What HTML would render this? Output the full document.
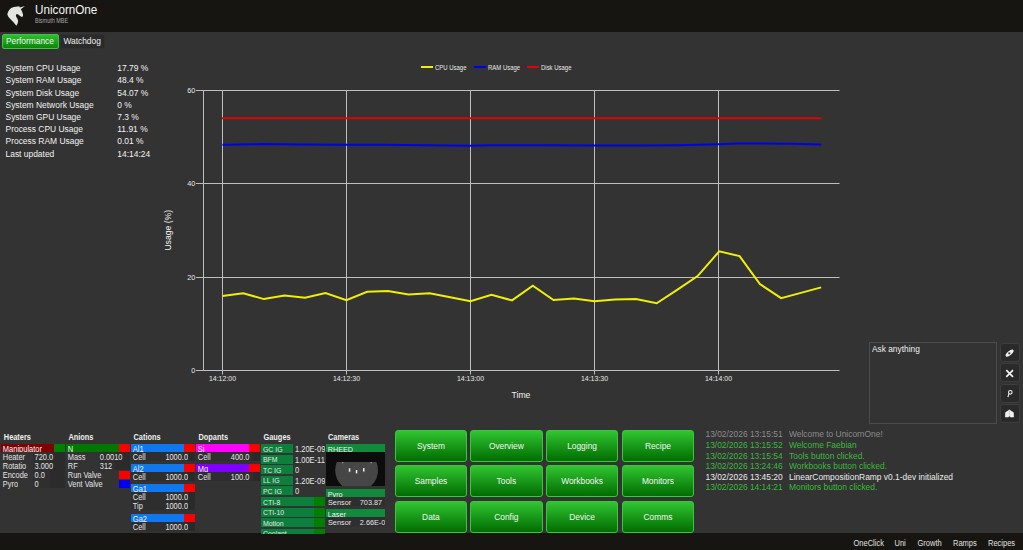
<!DOCTYPE html><html><head><meta charset="utf-8"><style>
*{margin:0;padding:0;box-sizing:border-box}
html,body{width:1023px;height:550px;overflow:hidden;background:#333333;font-family:"Liberation Sans",sans-serif;color:#e8e8e8}
.a{position:absolute}
.t{position:absolute;white-space:nowrap;line-height:1;transform:scaleY(1.1);transform-origin:0 0}
.tab{position:absolute;top:34px;height:15px;font-size:8.4px;line-height:12.5px;color:#f0f0f0;border-radius:2px}
.stat{font-size:8.45px;color:#f2f2f2}
.btn{position:absolute;width:72.5px;height:32px;border:1px solid #36cb36;border-radius:3px;background:linear-gradient(#31c531,#016c01);color:#f4f4f4;font-size:8.4px;text-align:center;line-height:31.9px}
.log{font-size:8.42px}
.ft{font-size:7.5px;color:#e0e0e0;top:538.5px}
.hd{font-size:7.4px;font-weight:bold;color:#f0f0f0}
.sm{font-size:7.4px;color:#e6e6e6}
.gl{font-size:6.9px;color:#e6e6e6}
</style></head><body>
<div class="a" style="left:0;top:0;width:1023px;height:32px;background:#171511"></div>
<div class="a" style="left:0;top:533px;width:1023px;height:17px;background:#171511"></div>
<div class="t" style="left:35px;top:3.2px;font-size:11.7px;color:#f4f4f4">UnicornOne</div>
<div class="t" style="left:35px;top:15.7px;font-size:7.3px;color:#a8a8a8;transform:scale(0.75,1.1);transform-origin:0 0">Bismuth MBE</div>
<svg class="a" style="left:0;top:0" width="32" height="32"><path d="M13.9,7.0 11.1,8.0 9.2,9.9 8.0,12.0 7.3,14.3 8.2,16.4 9.6,18.3 11.5,20.2 13.3,22.0 14.9,23.9 16.4,25.8 17.6,23.4 18.2,21.0 17.4,18.7 16.2,16.8 15.9,15.0 16.7,14.1 18.2,14.6 20.1,15.9 21.9,16.9 23.0,16.3 23.0,14.5 22.4,12.6 21.6,10.4 20.8,9.2 24.9,5.9 19.8,7.6 19.3,6.3 17.7,6.6 Z" fill="#e2e6e2"/></svg>
<div class="tab" style="left:2px;width:57px;background:linear-gradient(#2fbf2f,#0a860a);border:1px solid #3cc83c;padding-left:3px"><span style="display:inline-block;transform:scaleY(1.12)">Performance</span></div>
<div class="tab" style="left:60.4px;width:44.6px;background:#2a2a2a;border:1px solid #303030;padding-left:2px;line-height:12.6px"><span style="display:inline-block;transform:scaleY(1.12)">Watchdog</span></div>
<div class="t stat" style="left:5.5px;top:63.0px">System CPU Usage</div>
<div class="t stat" style="left:117.3px;top:63.0px">17.79 %</div>
<div class="t stat" style="left:5.5px;top:75.2px">System RAM Usage</div>
<div class="t stat" style="left:117.3px;top:75.2px">48.4 %</div>
<div class="t stat" style="left:5.5px;top:87.5px">System Disk Usage</div>
<div class="t stat" style="left:117.3px;top:87.5px">54.07 %</div>
<div class="t stat" style="left:5.5px;top:99.7px">System Network Usage</div>
<div class="t stat" style="left:117.3px;top:99.7px">0 %</div>
<div class="t stat" style="left:5.5px;top:111.9px">System GPU Usage</div>
<div class="t stat" style="left:117.3px;top:111.9px">7.3 %</div>
<div class="t stat" style="left:5.5px;top:124.2px">Process CPU Usage</div>
<div class="t stat" style="left:117.3px;top:124.2px">11.91 %</div>
<div class="t stat" style="left:5.5px;top:136.4px">Process RAM Usage</div>
<div class="t stat" style="left:117.3px;top:136.4px">0.01 %</div>
<div class="t stat" style="left:5.5px;top:148.6px">Last updated</div>
<div class="t stat" style="left:117.3px;top:148.6px">14:14:24</div>
<svg class="a" style="left:0;top:0" width="1023" height="430"><line x1="196" y1="90.5" x2="839.5" y2="90.5" stroke="#bebebe" stroke-width="1"/><line x1="196" y1="183.5" x2="839.5" y2="183.5" stroke="#bebebe" stroke-width="1"/><line x1="196" y1="277.5" x2="839.5" y2="277.5" stroke="#bebebe" stroke-width="1"/><line x1="196" y1="370.5" x2="839.5" y2="370.5" stroke="#bebebe" stroke-width="1"/><line x1="203.5" y1="90" x2="203.5" y2="371" stroke="#bebebe" stroke-width="1"/><line x1="222.5" y1="90" x2="222.5" y2="374.5" stroke="#bebebe" stroke-width="1"/><line x1="346.5" y1="90" x2="346.5" y2="374.5" stroke="#bebebe" stroke-width="1"/><line x1="470.5" y1="90" x2="470.5" y2="374.5" stroke="#bebebe" stroke-width="1"/><line x1="594.5" y1="90" x2="594.5" y2="374.5" stroke="#bebebe" stroke-width="1"/><line x1="718.5" y1="90" x2="718.5" y2="374.5" stroke="#bebebe" stroke-width="1"/><polyline points="222,118.2 821.5,118.2" fill="none" stroke="#e80000" stroke-width="2"/><polyline points="222.4,144.8 263.3,144.0 299,144.6 345,144.8 383,144.8 425,145.3 470.5,145.7 489,145.2 549,145.2 594,145.5 640,145.5 677.5,145.3 718.7,144.2 737.4,143.4 760,143.4 790,143.8 821.3,144.6" fill="none" stroke="#0000f0" stroke-width="2"/><polyline points="222.4,296.0 243.2,293.3 263.9,299.1 284.5,295.6 305.0,297.8 325.5,293.0 346.4,300.1 367.1,291.8 387.9,291.1 408.6,294.4 429.6,293.3 450.2,297.3 470.5,301.3 491.5,294.7 512.0,300.4 532.8,285.8 553.5,300.0 574.0,298.5 594.6,301.3 614.9,299.4 635.9,299.1 656.7,303.3 677.1,289.8 697.6,276.1 719.2,251.4 739.6,256.1 759.9,284.1 781.1,298.1 801.8,292.6 821.2,287.4" fill="none" stroke="#f0f000" stroke-width="2" stroke-linejoin="miter"/><line x1="421" y1="67" x2="433" y2="67" stroke="#f0f000" stroke-width="2"/><line x1="474" y1="67" x2="486" y2="67" stroke="#0000f0" stroke-width="2"/><line x1="527" y1="67" x2="539" y2="67" stroke="#e80000" stroke-width="2"/></svg>
<div class="t" style="left:435px;top:63.5px;font-size:7.1px;color:#e8e8e8;transform:scale(0.84,1.1);transform-origin:0 0">CPU Usage</div>
<div class="t" style="left:488px;top:63.5px;font-size:7.1px;color:#e8e8e8;transform:scale(0.84,1.1);transform-origin:0 0">RAM Usage</div>
<div class="t" style="left:541px;top:63.5px;font-size:7.1px;color:#e8e8e8;transform:scale(0.84,1.1);transform-origin:0 0">Disk Usage</div>
<div class="t" style="left:160px;width:35.2px;text-align:right;top:85.9px;font-size:7.2px;color:#e8e8e8">60</div>
<div class="t" style="left:160px;width:35.2px;text-align:right;top:178.9px;font-size:7.2px;color:#e8e8e8">40</div>
<div class="t" style="left:160px;width:35.2px;text-align:right;top:272.9px;font-size:7.2px;color:#e8e8e8">20</div>
<div class="t" style="left:160px;width:35.2px;text-align:right;top:365.9px;font-size:7.2px;color:#e8e8e8">0</div>
<div class="t" style="left:192.5px;width:60px;text-align:center;top:374.4px;font-size:7.0px;color:#e8e8e8">14:12:00</div>
<div class="t" style="left:316.5px;width:60px;text-align:center;top:374.4px;font-size:7.0px;color:#e8e8e8">14:12:30</div>
<div class="t" style="left:440.5px;width:60px;text-align:center;top:374.4px;font-size:7.0px;color:#e8e8e8">14:13:00</div>
<div class="t" style="left:564.5px;width:60px;text-align:center;top:374.4px;font-size:7.0px;color:#e8e8e8">14:13:30</div>
<div class="t" style="left:688.5px;width:60px;text-align:center;top:374.4px;font-size:7.0px;color:#e8e8e8">14:14:00</div>
<div class="t" style="left:491px;width:60px;text-align:center;top:389.8px;font-size:8.6px;color:#f0f0f0">Time</div>
<div class="t" style="left:138px;width:60px;text-align:center;top:225.8px;font-size:8.6px;color:#f0f0f0;transform:rotate(-90deg) scaleY(1.1);transform-origin:50% 50%">Usage (%)</div>
<div class="a" style="left:869.2px;top:342.3px;width:128px;height:81.5px;border:1px solid #4c4c4c"></div>
<div class="t" style="left:872px;top:343.5px;font-size:8.35px;color:#f0f0f0">Ask anything</div>
<div class="a" style="left:1000px;top:342.8px;width:19.5px;height:19.2px;background:#2a2a2a;border:1px solid #3d3d3d;border-radius:3px"></div>
<div class="a" style="left:1000px;top:363.3px;width:19.5px;height:19.2px;background:#2a2a2a;border:1px solid #3d3d3d;border-radius:3px"></div>
<div class="a" style="left:1000px;top:384.0px;width:19.5px;height:19.2px;background:#2a2a2a;border:1px solid #3d3d3d;border-radius:3px"></div>
<div class="a" style="left:1000px;top:403.9px;width:19.5px;height:19.2px;background:#2a2a2a;border:1px solid #3d3d3d;border-radius:3px"></div>
<svg class="a" style="left:998px;top:340px" width="25" height="90"><ellipse cx="11.6" cy="13.1" rx="4.9" ry="2.0" transform="rotate(-40 11.6 13.1)" fill="#f2f2f2"/><ellipse cx="11.3" cy="13.3" rx="1.2" ry="1.0" transform="rotate(-40 11.3 13.3)" fill="#3a3a3a"/><path d="M8.3,30.2 L15,36.8 M15,30.2 L8.3,36.8" stroke="#f4f4f4" stroke-width="1.7"/><circle cx="12.3" cy="52.3" r="1.8" fill="none" stroke="#eeeeee" stroke-width="1.1"/><path d="M10.9,53.6 L9.9,57.1" fill="none" stroke="#eeeeee" stroke-width="1.1"/><path d="M7.4,77.0 L7.5,72.6 L11.4,69.9 L15.4,72.6 L15.6,77.0 L12.4,77.0 L11.4,75.6 L10.4,77.0 Z" fill="#f2f2f2" stroke="#f2f2f2" stroke-width="0.6" stroke-linejoin="round"/><path d="M11.4,71 L11.4,75.2" stroke="#bdbdbd" stroke-width="0.7"/></svg>
<div class="t hd" style="left:3.8px;top:433.3px">Heaters</div>
<div class="a" style="left:33px;top:452px;width:32px;height:36px;background:#2f2f2f"></div>
<div class="a" style="left:49.5px;top:452px;width:15.5px;height:36px;background:#2b2b2b"></div>
<div class="a" style="left:1px;top:444px;width:53px;height:8px;background:#800000;overflow:hidden"><div class="t" style="left:1.8px;top:1.0px;font-size:7.5px;color:#f4f4f4">Manipulator</div></div>
<div class="a" style="left:54px;top:444px;width:11px;height:8px;background:#008000"></div>
<div class="t sm" style="left:2.8px;top:453.1px">Heater</div>
<div class="t sm" style="left:34.6px;top:453.1px">720.0</div>
<div class="t sm" style="left:2.8px;top:462.1px">Rotatio</div>
<div class="t sm" style="left:34.6px;top:462.1px">3.000</div>
<div class="t sm" style="left:2.8px;top:471.1px">Encode</div>
<div class="t sm" style="left:34.6px;top:471.1px">0.0</div>
<div class="t sm" style="left:2.8px;top:480.1px">Pyro</div>
<div class="t sm" style="left:34.6px;top:480.1px">0</div>
<div class="t hd" style="left:68.4px;top:433.3px">Anions</div>
<div class="a" style="left:99px;top:452px;width:31px;height:18px;background:#2f2f2f"></div>
<div class="a" style="left:115px;top:452px;width:15px;height:18px;background:#2b2b2b"></div>
<div class="a" style="left:66px;top:444px;width:53px;height:8px;background:#007800;overflow:hidden"><div class="t" style="left:1.8px;top:1.0px;font-size:7.5px;color:#f4f4f4">N</div></div>
<div class="a" style="left:119px;top:444px;width:11px;height:8px;background:#fa0000"></div>
<div class="t sm" style="left:67.8px;top:453.1px">Mass</div>
<div class="t sm" style="left:99.8px;top:453.1px">0.0010</div>
<div class="t sm" style="left:67.8px;top:462.1px">RF</div>
<div class="t sm" style="left:99.8px;top:462.1px">312</div>
<div class="t sm" style="left:67.8px;top:471.1px">Run Valve</div>
<div class="t sm" style="left:67.8px;top:480.1px">Vent Valve</div>
<div class="a" style="left:119px;top:471px;width:11px;height:8px;background:#fa0000"></div>
<div class="a" style="left:119px;top:480px;width:11px;height:8px;background:#0000f0"></div>
<div class="t hd" style="left:133.5px;top:433.3px">Cations</div>
<div class="a" style="left:131px;top:444px;width:53.3px;height:8px;background:#0f78ee;overflow:hidden"><div class="t" style="left:1.8px;top:1.0px;font-size:7.5px;color:#f4f4f4">Al1</div></div>
<div class="a" style="left:184.3px;top:444px;width:10.7px;height:8px;background:#fa0000"></div>
<div class="a" style="left:131px;top:452px;width:64px;height:9px;background:#2e2e2e"></div>
<div class="a" style="left:188px;top:452px;width:7px;height:9px;background:#2a2a2a"></div>
<div class="t sm" style="left:132.8px;top:453.1px">Cell</div>
<div class="t sm" style="left:148px;width:40px;text-align:right;top:453.1px">1000.0</div>
<div class="a" style="left:131px;top:464px;width:53.3px;height:8px;background:#0f78ee;overflow:hidden"><div class="t" style="left:1.8px;top:1.0px;font-size:7.5px;color:#f4f4f4">Al2</div></div>
<div class="a" style="left:184.3px;top:464px;width:10.7px;height:8px;background:#fa0000"></div>
<div class="a" style="left:131px;top:472px;width:64px;height:9px;background:#2e2e2e"></div>
<div class="a" style="left:188px;top:472px;width:7px;height:9px;background:#2a2a2a"></div>
<div class="t sm" style="left:132.8px;top:473.1px">Cell</div>
<div class="t sm" style="left:148px;width:40px;text-align:right;top:473.1px">1000.0</div>
<div class="a" style="left:131px;top:484px;width:53.3px;height:8px;background:#0f78ee;overflow:hidden"><div class="t" style="left:1.8px;top:1.0px;font-size:7.5px;color:#f4f4f4">Ga1</div></div>
<div class="a" style="left:184.3px;top:484px;width:10.7px;height:8px;background:#fa0000"></div>
<div class="a" style="left:131px;top:492px;width:64px;height:18px;background:#2e2e2e"></div>
<div class="a" style="left:188px;top:492px;width:7px;height:18px;background:#2a2a2a"></div>
<div class="t sm" style="left:132.8px;top:493.1px">Cell</div>
<div class="t sm" style="left:148px;width:40px;text-align:right;top:493.1px">1000.0</div>
<div class="t sm" style="left:132.8px;top:502.1px">Tip</div>
<div class="t sm" style="left:148px;width:40px;text-align:right;top:502.1px">1000.0</div>
<div class="a" style="left:131px;top:514px;width:53.3px;height:8px;background:#0f78ee;overflow:hidden"><div class="t" style="left:1.8px;top:1.0px;font-size:7.5px;color:#f4f4f4">Ga2</div></div>
<div class="a" style="left:184.3px;top:514px;width:10.7px;height:8px;background:#fa0000"></div>
<div class="a" style="left:131px;top:522px;width:64px;height:9px;background:#2e2e2e"></div>
<div class="a" style="left:188px;top:522px;width:7px;height:9px;background:#2a2a2a"></div>
<div class="t sm" style="left:132.8px;top:523.1px">Cell</div>
<div class="t sm" style="left:148px;width:40px;text-align:right;top:523.1px">1000.0</div>
<div class="t hd" style="left:198.5px;top:433.3px">Dopants</div>
<div class="a" style="left:196px;top:444px;width:53.2px;height:8px;background:#ff00ff;overflow:hidden"><div class="t" style="left:1.8px;top:1.0px;font-size:7.5px;color:#f4f4f4">Si</div></div>
<div class="a" style="left:249.2px;top:444px;width:10.8px;height:8px;background:#fa0000"></div>
<div class="a" style="left:196px;top:452px;width:64px;height:9px;background:#2e2e2e"></div>
<div class="a" style="left:253px;top:452px;width:7px;height:9px;background:#2a2a2a"></div>
<div class="t sm" style="left:197.8px;top:453.1px">Cell</div>
<div class="t sm" style="left:209.3px;width:40px;text-align:right;top:453.1px">400.0</div>
<div class="a" style="left:196px;top:464px;width:53.2px;height:8px;background:#8000ff;overflow:hidden"><div class="t" style="left:1.8px;top:1.0px;font-size:7.5px;color:#f4f4f4">Mg</div></div>
<div class="a" style="left:249.2px;top:464px;width:10.8px;height:8px;background:#fa0000"></div>
<div class="a" style="left:196px;top:472px;width:64px;height:9px;background:#2e2e2e"></div>
<div class="a" style="left:253px;top:472px;width:7px;height:9px;background:#2a2a2a"></div>
<div class="t sm" style="left:197.8px;top:473.1px">Cell</div>
<div class="t sm" style="left:209.3px;width:40px;text-align:right;top:473.1px">100.0</div>
<div class="t hd" style="left:263.5px;top:433.3px">Gauges</div>
<div class="a" style="left:261px;top:444px;width:64px;height:90px;overflow:hidden">
<div class="a" style="left:0;top:0.0px;width:32px;height:9px;background:#0c7f3c"></div>
<div class="t gl" style="left:2px;top:1.6px">GC IG</div>
<div class="t gl" style="left:34px;top:0.9px;font-size:7.5px">1.20E-09</div>
<div class="a" style="left:0;top:10.6px;width:32px;height:9px;background:#0c7f3c"></div>
<div class="t gl" style="left:2px;top:12.2px">BFM</div>
<div class="t gl" style="left:34px;top:11.5px;font-size:7.5px">1.00E-11</div>
<div class="a" style="left:0;top:21.2px;width:32px;height:9px;background:#0c7f3c"></div>
<div class="t gl" style="left:2px;top:22.8px">TC IG</div>
<div class="t gl" style="left:34px;top:22.1px;font-size:7.5px">0</div>
<div class="a" style="left:0;top:31.8px;width:32px;height:9px;background:#0c7f3c"></div>
<div class="t gl" style="left:2px;top:33.4px">LL IG</div>
<div class="t gl" style="left:34px;top:32.7px;font-size:7.5px">1.20E-09</div>
<div class="a" style="left:0;top:42.4px;width:32px;height:9px;background:#0c7f3c"></div>
<div class="t gl" style="left:2px;top:44.0px">PC IG</div>
<div class="t gl" style="left:34px;top:43.3px;font-size:7.5px">0</div>
<div class="a" style="left:0;top:53.0px;width:53px;height:9px;background:#0c7f3c"></div>
<div class="a" style="left:53px;top:53.0px;width:11px;height:9px;background:#008000"></div>
<div class="t gl" style="left:2px;top:54.6px">CTI-8</div>
<div class="a" style="left:0;top:63.6px;width:53px;height:9px;background:#0c7f3c"></div>
<div class="a" style="left:53px;top:63.6px;width:11px;height:9px;background:#008000"></div>
<div class="t gl" style="left:2px;top:65.2px">CTI-10</div>
<div class="a" style="left:0;top:74.2px;width:53px;height:9px;background:#0c7f3c"></div>
<div class="a" style="left:53px;top:74.2px;width:11px;height:9px;background:#008000"></div>
<div class="t gl" style="left:2px;top:75.8px">Motion</div>
<div class="a" style="left:0;top:84.8px;width:53px;height:9px;background:#0c7f3c"></div>
<div class="a" style="left:53px;top:84.8px;width:11px;height:9px;background:#008000"></div>
<div class="t gl" style="left:2px;top:86.4px">Coolant</div>
</div>
<div class="t hd" style="left:328px;top:433.3px">Cameras</div>
<div class="a" style="left:326px;top:444px;width:59px;height:8px;background:#118a3e;overflow:hidden"><div class="t" style="left:1.8px;top:0.6px;font-size:7.2px;color:#f4f4f4">RHEED</div></div>
<svg class="a" style="left:326px;top:452px" width="59" height="34"><rect width="59" height="34" fill="#0c0c0c"/><clipPath id="cc"><rect x="0" y="10" width="59" height="24"/></clipPath><circle cx="30.6" cy="18.2" r="21.4" fill="#464646" clip-path="url(#cc)"/><polyline points="16,11 22,22 30.5,12 39,22 45,11" fill="none" stroke="#515151" stroke-width="0.6"/><polyline points="18,11 25,21 30.5,14 36,21 43,11" fill="none" stroke="#4e4e4e" stroke-width="0.5"/><rect x="22.8" y="16.3" width="1.5" height="3.4" fill="#f0f0f0"/><rect x="29.8" y="18" width="1.5" height="3.4" fill="#f0f0f0"/><rect x="37" y="16.1" width="1.5" height="3.4" fill="#f0f0f0"/><rect x="16" y="10.2" width="1.5" height="1" fill="#9a9a9a"/><rect x="44.5" y="10.2" width="1.5" height="1" fill="#9a9a9a"/></svg>
<div class="a" style="left:326px;top:489px;width:59px;height:8px;background:#118a3e;overflow:hidden"><div class="t" style="left:1.8px;top:0.6px;font-size:7.2px;color:#f4f4f4">Pyro</div></div>
<div class="a" style="left:326px;top:497px;width:59px;height:9px;background:#2e2e2e"></div>
<div class="t gl" style="left:328px;top:498.3px;font-size:7.3px">Sensor</div><div class="t gl" style="left:359.8px;top:498.3px;font-size:7.3px">703.87</div>
<div class="a" style="left:326px;top:509px;width:59px;height:8px;background:#118a3e;overflow:hidden"><div class="t" style="left:1.8px;top:0.6px;font-size:7.2px;color:#f4f4f4">Laser</div></div>
<div class="a" style="left:326px;top:517px;width:59px;height:9px;background:#2e2e2e;overflow:hidden"><div class="t gl" style="left:2px;top:1.3px;font-size:7.3px">Sensor</div><div class="t gl" style="left:33.8px;top:1.3px;font-size:7.3px">2.66E-07</div></div>
<div class="btn" style="left:394.7px;top:430.3px"><span style="display:inline-block;transform:scaleY(1.12)">System</span></div>
<div class="btn" style="left:470.1px;top:430.3px"><span style="display:inline-block;transform:scaleY(1.12)">Overview</span></div>
<div class="btn" style="left:545.8px;top:430.3px"><span style="display:inline-block;transform:scaleY(1.12)">Logging</span></div>
<div class="btn" style="left:621.7px;top:430.3px"><span style="display:inline-block;transform:scaleY(1.12)">Recipe</span></div>
<div class="btn" style="left:394.7px;top:465.4px"><span style="display:inline-block;transform:scaleY(1.12)">Samples</span></div>
<div class="btn" style="left:470.1px;top:465.4px"><span style="display:inline-block;transform:scaleY(1.12)">Tools</span></div>
<div class="btn" style="left:545.8px;top:465.4px"><span style="display:inline-block;transform:scaleY(1.12)">Workbooks</span></div>
<div class="btn" style="left:621.7px;top:465.4px"><span style="display:inline-block;transform:scaleY(1.12)">Monitors</span></div>
<div class="btn" style="left:394.7px;top:501px"><span style="display:inline-block;transform:scaleY(1.12)">Data</span></div>
<div class="btn" style="left:470.1px;top:501px"><span style="display:inline-block;transform:scaleY(1.12)">Config</span></div>
<div class="btn" style="left:545.8px;top:501px"><span style="display:inline-block;transform:scaleY(1.12)">Device</span></div>
<div class="btn" style="left:621.7px;top:501px"><span style="display:inline-block;transform:scaleY(1.12)">Comms</span></div>
<div class="t log" style="left:705.5px;top:429.3px;color:#8c8c8c">13/02/2026 13:15:51</div>
<div class="t log" style="left:789px;top:429.3px;color:#8c8c8c">Welcome to UnicornOne!</div>
<div class="t log" style="left:705.5px;top:439.9px;color:#3aba3a">13/02/2026 13:15:52</div>
<div class="t log" style="left:789px;top:439.9px;color:#3aba3a">Welcome Faebian</div>
<div class="t log" style="left:705.5px;top:450.5px;color:#3aba3a">13/02/2026 13:15:54</div>
<div class="t log" style="left:789px;top:450.5px;color:#3aba3a">Tools button clicked.</div>
<div class="t log" style="left:705.5px;top:461.1px;color:#3aba3a">13/02/2026 13:24:46</div>
<div class="t log" style="left:789px;top:461.1px;color:#3aba3a">Workbooks button clicked.</div>
<div class="t log" style="left:705.5px;top:471.7px;color:#ececec">13/02/2026 13:45:20</div>
<div class="t log" style="left:789px;top:471.7px;color:#ececec">LinearCompositionRamp v0.1-dev initialized</div>
<div class="t log" style="left:705.5px;top:482.3px;color:#3aba3a">13/02/2026 14:14:21</div>
<div class="t log" style="left:789px;top:482.3px;color:#3aba3a">Monitors button clicked.</div>
<div class="t ft" style="left:853.5px">OneClick</div>
<div class="t ft" style="left:894.5px">Uni</div>
<div class="t ft" style="left:917.5px">Growth</div>
<div class="t ft" style="left:953px">Ramps</div>
<div class="t ft" style="left:988px">Recipes</div>
</body></html>
